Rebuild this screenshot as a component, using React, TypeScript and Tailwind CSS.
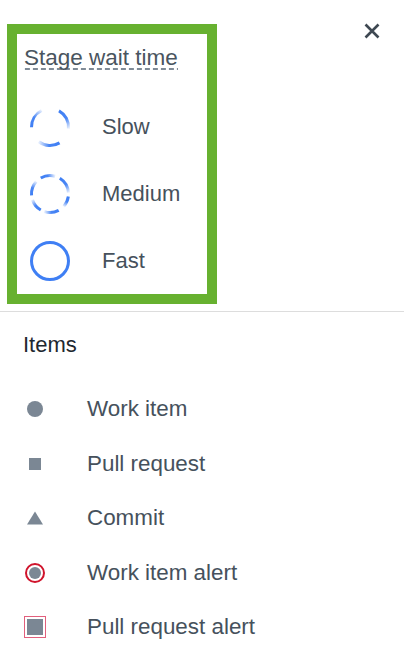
import React from 'react';

const BLUE = '#3f7ff4';
const GRAY = '#7b8794';

function pt(cx: number, cy: number, r: number, a: number): [number, number] {
  const rad = (a * Math.PI) / 180;
  return [cx + r * Math.sin(rad), cy - r * Math.cos(rad)];
}

function Ring({ dashes, id }: { dashes: [number, number][] | null; id: string }) {
  const cx = 22;
  const cy = 22;
  const r = 18.5;
  return (
    <svg width="44" height="44" viewBox="0 0 44 44" className="shrink-0">
      <defs>
        {dashes?.map(([a1, a2], i) => {
          const [x1, y1] = pt(cx, cy, r, a1);
          const [x2, y2] = pt(cx, cy, r, a2);
          return (
            <linearGradient
              key={i}
              id={`${id}-${i}`}
              gradientUnits="userSpaceOnUse"
              x1={x1}
              y1={y1}
              x2={x2}
              y2={y2}
            >
              <stop offset="0" stopColor={BLUE} stopOpacity="1" />
              <stop offset="0.5" stopColor={BLUE} stopOpacity="0.95" />
              <stop offset="1" stopColor={BLUE} stopOpacity="0.12" />
            </linearGradient>
          );
        })}
      </defs>
      {dashes ? (
        dashes.map(([a1, a2], i) => {
          const [x1, y1] = pt(cx, cy, r, a1);
          const [x2, y2] = pt(cx, cy, r, a2);
          return (
            <path
              key={i}
              d={`M ${x1} ${y1} A ${r} ${r} 0 0 1 ${x2} ${y2}`}
              fill="none"
              stroke={`url(#${id}-${i})`}
              strokeWidth="3"
            />
          );
        })
      ) : (
        <circle cx={cx} cy={cy} r={r} fill="none" stroke={BLUE} strokeWidth="3" />
      )}
    </svg>
  );
}

const slow: [number, number][] = [
  [29, 95],
  [149, 217],
  [269, 333],
];
const medium: [number, number][] = [
  [330, 16],
  [32, 86],
  [98, 132],
  [152, 198],
  [210, 252],
  [266, 312],
];

function StageRow({ label, dashes, id }: { label: string; dashes: [number, number][] | null; id: string }) {
  return (
    <div className="flex h-[67px] items-center">
      <div className="ml-[11px]">
        <Ring dashes={dashes} id={id} />
      </div>
      <span className="ml-[30px] text-[22px] leading-[26px] text-[#46515c]">{label}</span>
    </div>
  );
}

function ItemRow({ icon, label }: { icon: React.ReactNode; label: string }) {
  return (
    <div className="flex h-[54.5px] items-center">
      <div className="flex w-[24px] items-center justify-center">{icon}</div>
      <span className="ml-[40px] text-[22.4px] leading-[26px] text-[#46515c]">{label}</span>
    </div>
  );
}

export default function App() {
  return (
    <div
      className="h-[670px] w-full overflow-hidden bg-white"
      style={{ fontFamily: '"Liberation Sans", Arial, sans-serif' }}
    >
      <div className="flex items-start justify-between pl-[7px] pr-[24px] pt-[24px]">
        <div className="h-[280px] w-[210px] border-[10px] border-[#67b130] pl-[7px] pt-[11px]">
          <div className="h-[25px]">
            <span className="inline-block h-[25px] bg-[linear-gradient(to_right,#7f8b97_62%,transparent_0)] bg-[length:8px_2px] bg-bottom bg-repeat-x text-[22.5px] leading-[25px] text-[#4a5560]">
              Stage wait time
            </span>
          </div>
          <div className="ml-[-7px] mt-[23px]">
            <StageRow label="Slow" dashes={slow} id="slow" />
            <StageRow label="Medium" dashes={medium} id="med" />
            <StageRow label="Fast" dashes={null} id="fast" />
          </div>
        </div>
        <button className="mt-[-1px] flex h-[16px] w-[16px] items-center justify-center" aria-label="Close">
          <svg width="16" height="16" viewBox="0 0 16 16">
            <path d="M1.5 1.5 L14.5 14.5 M14.5 1.5 L1.5 14.5" stroke="#3e4852" strokeWidth="2.6" strokeLinecap="butt" />
          </svg>
        </button>
      </div>

      <div className="mt-[7px] border-t border-[#dddddd] pl-[23px] pt-[19px]">
        <div className="text-[22px] leading-[28px] text-[#1e2830]">Items</div>
        <div className="mt-[23px]">
          <ItemRow icon={<div className="h-[16px] w-[16px] rounded-full bg-[#7b8794]" />} label="Work item" />
          <ItemRow icon={<div className="h-[12px] w-[12px] bg-[#7b8794]" />} label="Pull request" />
          <ItemRow
            icon={
              <svg width="16" height="14" viewBox="0 0 16 14">
                <polygon points="8,0.5 16,13.5 0,13.5" fill={GRAY} />
              </svg>
            }
            label="Commit"
          />
          <ItemRow
            icon={
              <div className="flex h-[20px] w-[20px] items-center justify-center rounded-full border-2 border-[#d0142c]">
                <div className="h-[12px] w-[12px] rounded-full bg-[#7b8794]" />
              </div>
            }
            label="Work item alert"
          />
          <ItemRow
            icon={
              <div className="flex h-[22px] w-[22px] items-center justify-center border border-[#e2607d]">
                <div className="h-[16px] w-[16px] bg-[#7b8794]" />
              </div>
            }
            label="Pull request alert"
          />
        </div>
      </div>
    </div>
  );
}
